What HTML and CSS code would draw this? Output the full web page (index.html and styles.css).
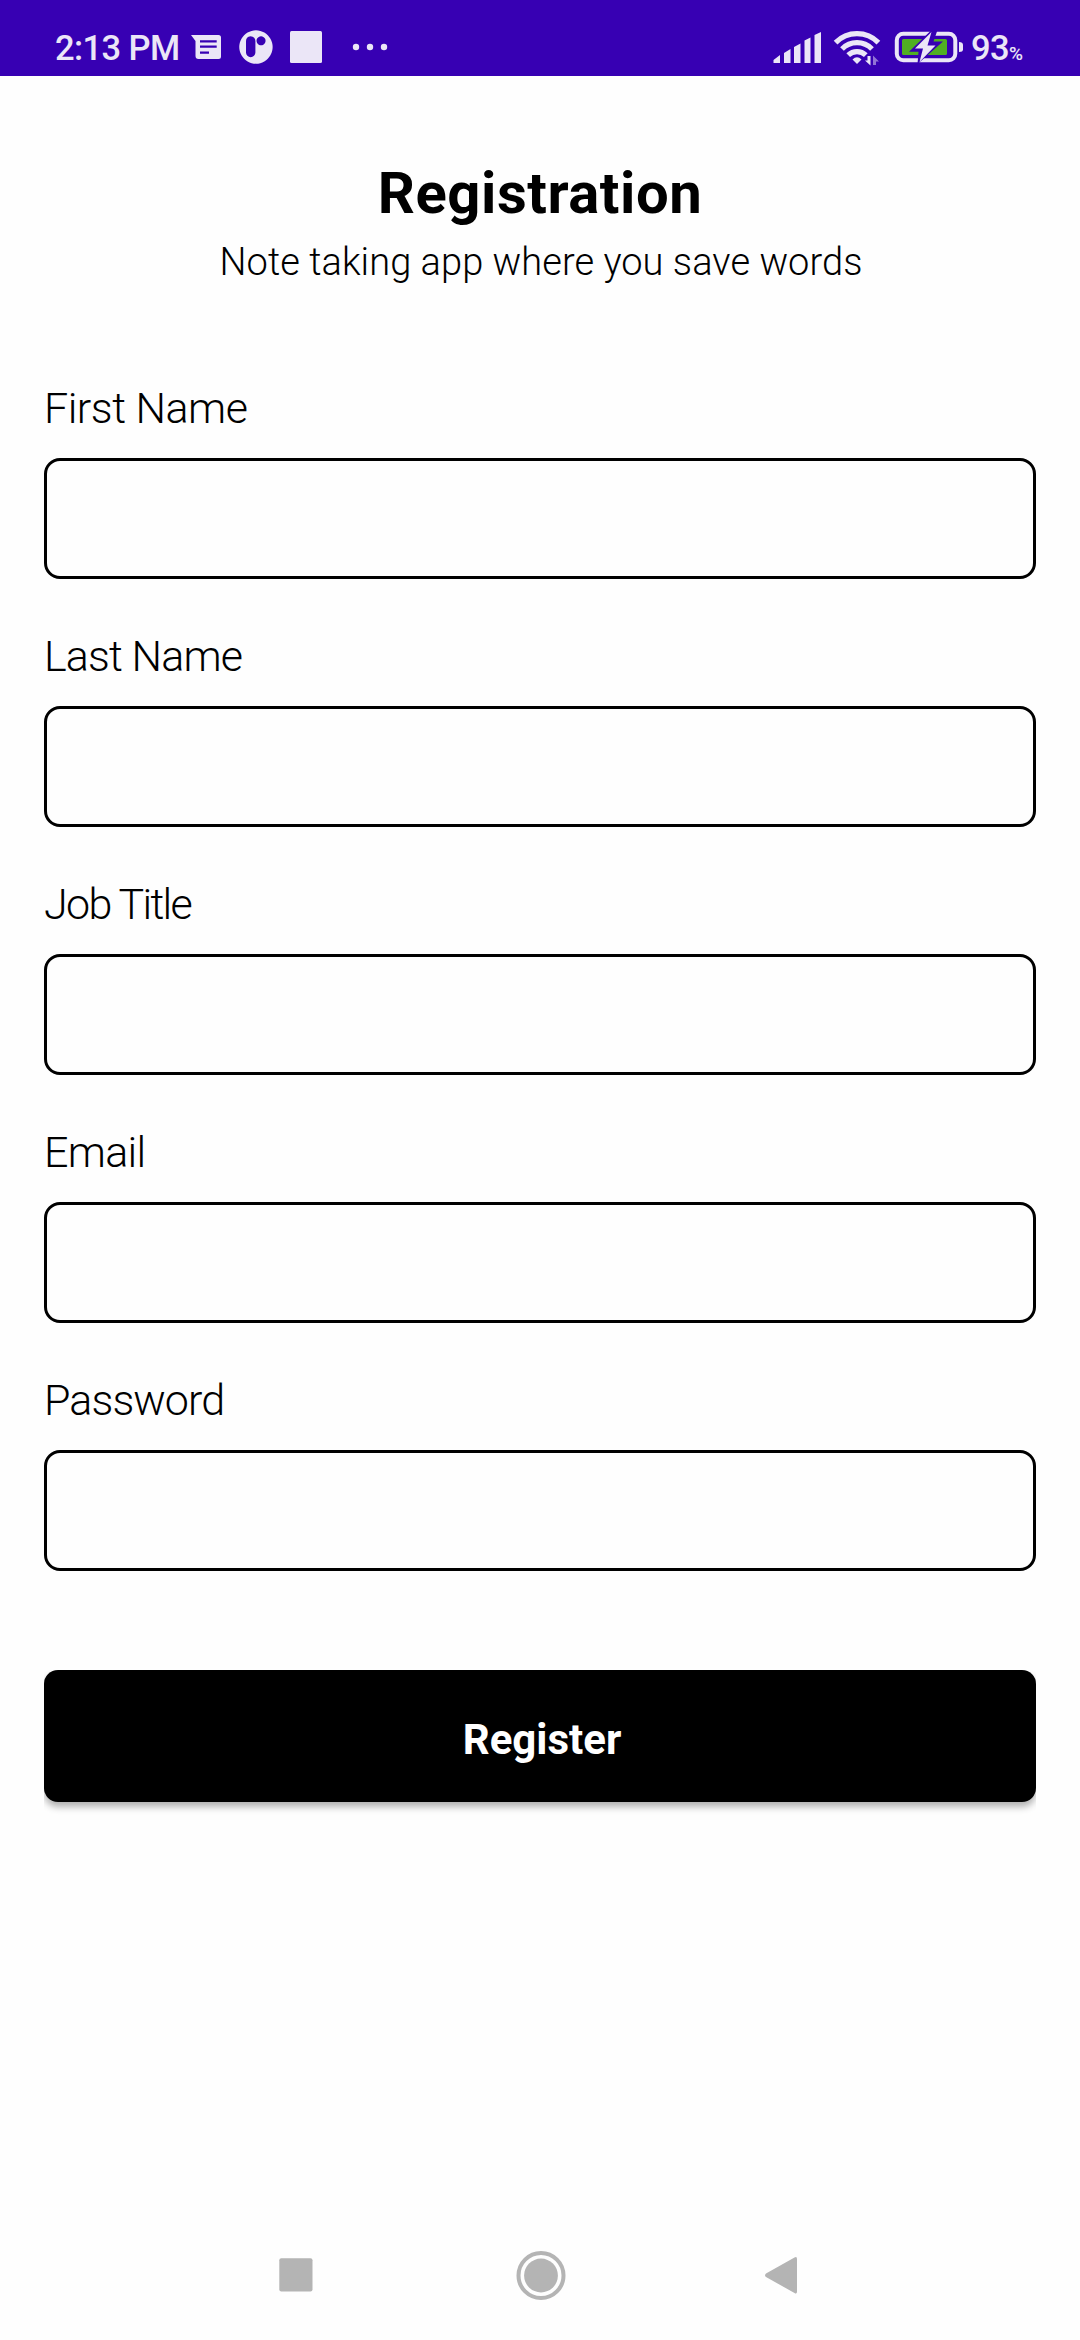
FILE: index.html
```html
<!DOCTYPE html>
<html lang="en">
<head>
<meta charset="utf-8">
<title>Registration</title>
<link rel="stylesheet" href="styles.css">
</head>
<body>
<div class="screen">
  <div class="status-bar">
    <span class="time">2:13 PM</span>
    <svg class="notifications" width="200" height="76" viewBox="190 0 200 76" fill="#ebe6f7">
      <path fill-rule="evenodd" d="M191 35H218.500Q221 35 221 37.500V56.500Q221 59 218.500 59H198.500Q195.500 59 195.500 56V41ZM200 40.200V42.400H216.700V40.200ZM200 45.600V47.800H216.700V45.600ZM200 51.400V53.800H209V51.400Z"/>
      <path fill-rule="evenodd" d="M256 30.300A16.700 16.700 0 1 1 255.900 30.300ZM250.500 36.300Q246 37 246 41V52.500A4.700 4.700 0 0 0 255.400 52.500V41Q255.400 37 250.500 36.300ZM261 36.300A4.500 4.500 0 1 0 261.100 36.300Z"/>
      <rect x="290" y="31" width="32" height="32" rx="1.500"/>
      <circle cx="356" cy="47" r="3.200"/><circle cx="370" cy="47" r="3.200"/><circle cx="384" cy="47" r="3.200"/>
    </svg>
    <svg class="indicators" width="192" height="76" viewBox="772 0 192 76" fill="#ebe6f7">
      <path d="M773.500 60 780 55V63H773.500ZM784 53 790.500 49V63H784ZM794 47 800.500 43.500V63H794ZM804.500 40.500 810.500 37.500V63H804.500ZM814.500 35 821 32V63H814.500Z"/>
      <g fill="none" stroke="#ebe6f7" stroke-width="5.200">
        <path d="M835.600 42.600A30 30 0 0 1 878.400 42.600"/><path d="M842 49A21 21 0 0 1 872 49"/><path d="M848.200 55.200A12.500 12.500 0 0 1 865.800 55.200"/>
      </g>
      <path d="M852.500 59.500Q857 55 861.500 59.500L857 64Z"/>
      <path d="M867.500 56H870.500V65.500L865 60.500H867.500Z"/>
      <path opacity=".5" d="M873 55.500 879 61.500H876V65H873Z"/>
      <rect x="896.800" y="33.800" width="58.500" height="26.500" rx="6.500" fill="none" stroke="#ebe6f7" stroke-width="4"/>
      <rect x="902" y="39" width="45" height="16" rx="1.500" fill="#50af23"/>
      <path d="M931.500 30 909 51.800H918.500L917.500 64 943 41.500H933.500L937.500 30Z" fill="#3700b3"/>
      <path d="M931.500 32 915 48.500H923L919.500 62 935.500 45.500H927.500Z"/>
      <path d="M959 42Q963 42 963 45V49.500Q963 52 959 52Z"/>
    </svg>
    <span class="battery">93<small>%</small></span>
  </div>
  <main class="page">
    <h1 class="title">Registration</h1>
    <p class="subtitle">Note taking app where you save words</p>
    <form class="form">
      <div class="field"><label class="label label-first" for="first">First Name</label><input class="input" id="first" type="text"></div>
      <div class="field"><label class="label label-last" for="last">Last Name</label><input class="input" id="last" type="text"></div>
      <div class="field"><label class="label label-job" for="job">Job Title</label><input class="input" id="job" type="text"></div>
      <div class="field"><label class="label label-email" for="email">Email</label><input class="input" id="email" type="email"></div>
      <div class="field"><label class="label label-password" for="password">Password</label><input class="input" id="password" type="password"></div>
      <button class="register" type="button">Register</button>
    </form>
  </main>
  <nav class="nav-bar">
    <svg width="34" height="50" viewBox="0 0 34 50"><rect x=".3" y="8.300" width="33.200" height="33.200" rx="2"/></svg>
    <svg class="home" width="50" height="50" viewBox="0 0 50 50"><circle cx="25" cy="25.500" r="16.900"/><circle cx="25" cy="25.500" r="22.500" fill="none" stroke="#b4b4b4" stroke-width="4"/></svg>
    <svg width="34" height="50" viewBox="0 0 34 50"><path d="M2 27Q0 25.200 2 23.400L30.500 7.500Q33 6 33 9V41.500Q33 44.500 30.500 43Z"/></svg>
  </nav>
</div>
</body>
</html>
```
FILE: styles.css
```css
* { box-sizing: border-box; }
body { margin: 0; font-family: Roboto, "Open Sans", sans-serif; color: #000; background: #fefefe; }
.screen { display: flex; flex-direction: column; height: 2340px; }
.status-bar { display: flex; flex: none; height: 76px; padding: 0 56px 0 55px; background: #3700b3; color: #ebe6f7; }
.time, .battery { font-size: 34.500px; font-weight: 500; line-height: 96px; height: 76px; white-space: nowrap; }
.time { width: 135px; letter-spacing: -.6px; }
.indicators { margin-left: auto; }
.battery { width: 60px; padding-left: 7px; letter-spacing: -.6px; }
.battery small { font-size: 19px; }
.page { padding: 77px 44px 0; }
.title { margin: 0; font-size: 58px; font-weight: 700; line-height: 80px; letter-spacing: .55px; text-align: center; }
.subtitle { margin: 1px 0 0; font-size: 38px; font-weight: 350; line-height: 56px; letter-spacing: .05px; text-align: center; padding-left: 2px; }
.form { display: flex; flex-direction: column; gap: 46px; margin-top: 87px; }
.field { display: flex; flex-direction: column; gap: 19px; }
.label { font-size: 43px; font-weight: 350; line-height: 62px; }
.label-first { letter-spacing: -.5px; }
.label-last { letter-spacing: -.85px; }
.label-job { letter-spacing: -1.7px; }
.label-email { letter-spacing: -.7px; }
.label-password { letter-spacing: -.9px; }
.input { width: 100%; height: 121px; padding: 0 30px; border: 3px solid #000; border-radius: 16px; background: transparent; font: inherit; font-size: 43px; outline: none; }
.register { height: 132px; margin-top: 53px; padding: 7px 0 0 4px; border: 0; border-radius: 14px; background: #000; color: #fff; font: 700 42px/60px Roboto, sans-serif; box-shadow: 0 5px 7px rgba(0, 0, 0, .3); clip-path: inset(0 0 -16px); }
.nav-bar { display: flex; justify-content: space-between; align-items: center; height: 50px; margin: auto 282px 40px 279px; fill: #b4b4b4; }
.home { margin-left: 4px; }
```
